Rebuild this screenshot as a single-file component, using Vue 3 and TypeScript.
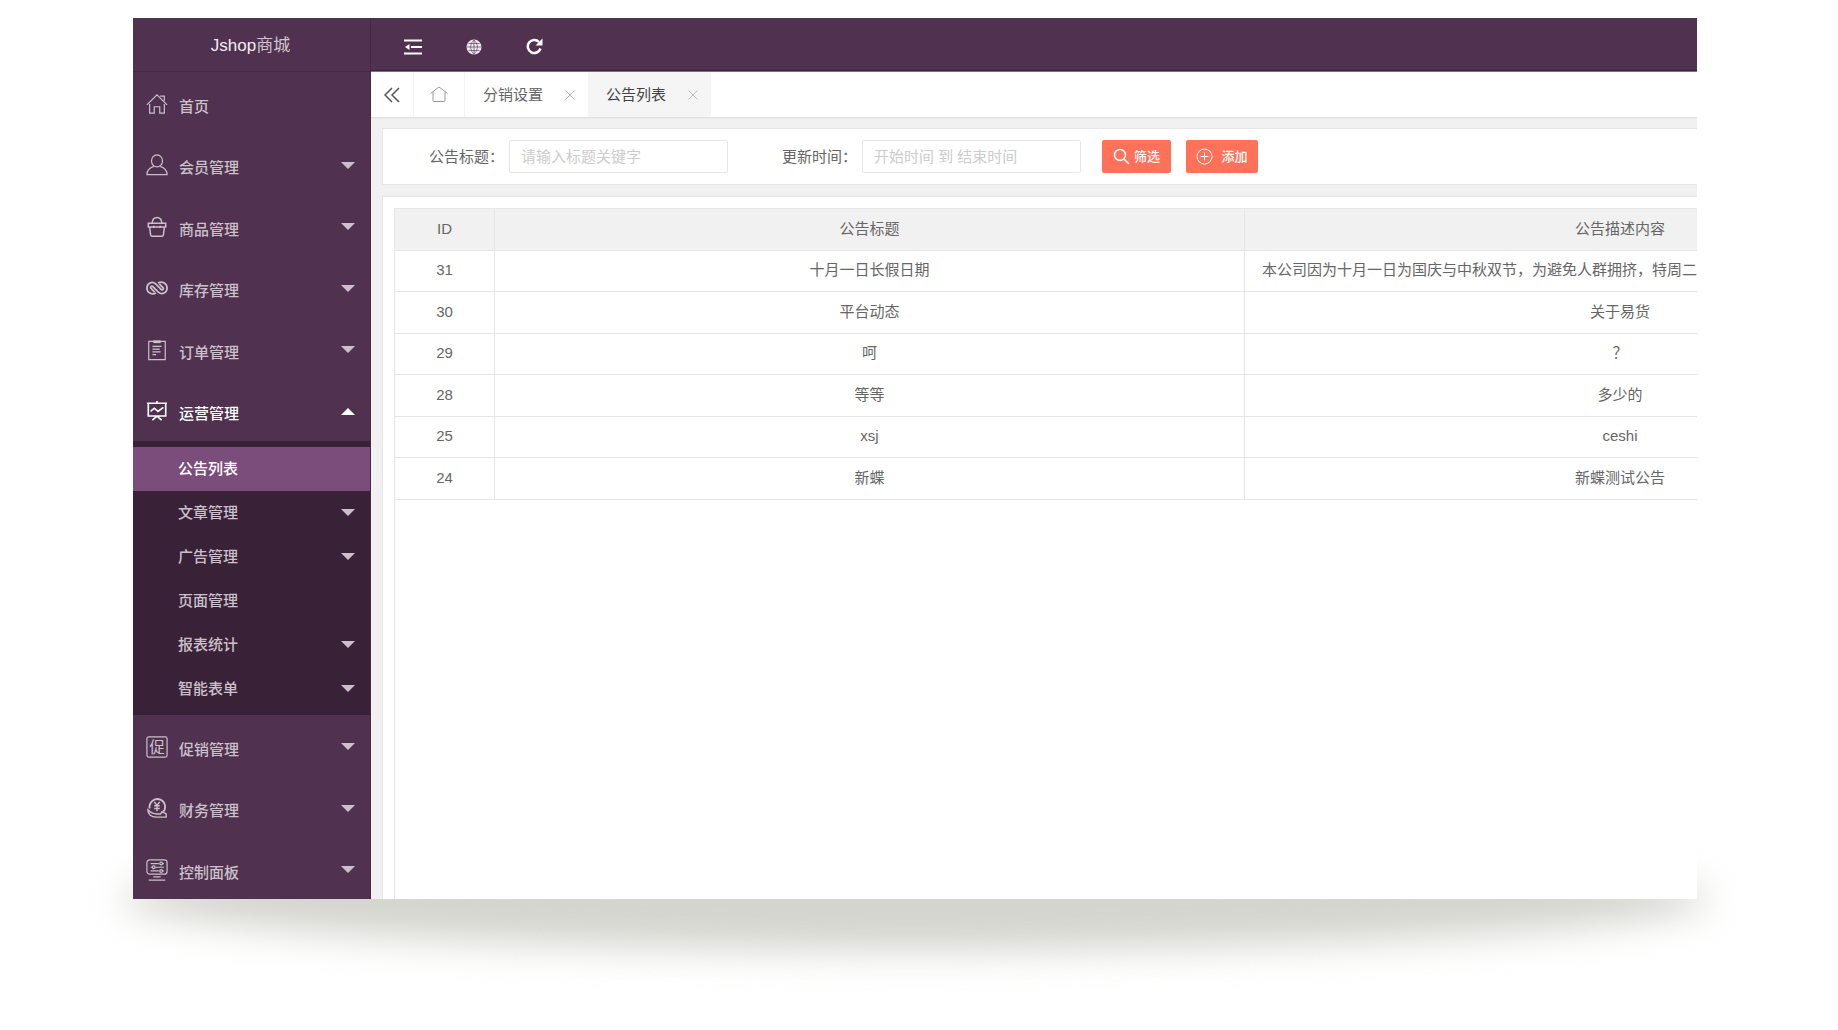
<script setup lang="ts">
import { ref } from 'vue'

interface MenuItem {
  label: string
  icon: string
  expandable?: boolean
  open?: boolean
  children?: { label: string; expandable?: boolean; current?: boolean }[]
}

const menu: MenuItem[] = [
  { label: '首页', icon: 'home' },
  { label: '会员管理', icon: 'user', expandable: true },
  { label: '商品管理', icon: 'bag', expandable: true },
  { label: '库存管理', icon: 'link', expandable: true },
  { label: '订单管理', icon: 'order', expandable: true },
  {
    label: '运营管理',
    icon: 'board',
    expandable: true,
    open: true,
    children: [
      { label: '公告列表', current: true },
      { label: '文章管理', expandable: true },
      { label: '广告管理', expandable: true },
      { label: '页面管理' },
      { label: '报表统计', expandable: true },
      { label: '智能表单', expandable: true },
    ],
  },
  { label: '促销管理', icon: 'promo', expandable: true },
  { label: '财务管理', icon: 'finance', expandable: true },
  { label: '控制面板', icon: 'panel', expandable: true },
]

const rows = [
  { id: 31, title: '十月一日长假日期', content: '本公司因为十月一日为国庆与中秋双节，为避免人群拥挤，特周二', long: true },
  { id: 30, title: '平台动态', content: '关于易货' },
  { id: 29, title: '呵', content: '？' },
  { id: 28, title: '等等', content: '多少的' },
  { id: 25, title: 'xsj', content: 'ceshi' },
  { id: 24, title: '新蝶', content: '新蝶测试公告' },
]

const keyword = ref('')
const period = ref('')
</script>

<template>
  <div class="stage">
    <div class="window">
      <aside class="side">
        <div class="brand">Jshop<span>商城</span></div>
        <ul class="menu">
          <li v-for="item in menu" :key="item.label" :class="{ open: item.open }">
            <a href="#" class="entry">
              <svg class="icon" viewBox="0 0 24 24">
                <g v-if="item.icon === 'home'">
                  <path d="M1 13L12 2l11 11M4 12v10h5v-7h6v7h5V12M15.500 3.500h4.500v5" />
                </g>
                <g v-else-if="item.icon === 'user'">
                  <ellipse cx="12" cy="7.500" rx="6" ry="6.500" />
                  <path d="M8.500 13.500C4 15 1 18 1 22.500h22c0-4.500-3-7.500-7.500-9" />
                </g>
                <g v-else-if="item.icon === 'bag'" stroke-width="1.600">
                  <path d="M2.500 8h19v4h-19zM4 12l1 8.500c0 1 .5 1.500 1.500 1.500h11c1 0 1.500-.5 1.500-1.500L20 12M6.500 8c1-8.500 10-8.500 11 0" />
                  <path d="M8.500 10.500v2.500M15.500 10.500v2.500" stroke-width="2" />
                </g>
                <g v-else-if="item.icon === 'link'" stroke-width="1.900">
                  <path d="M11 17.500C6 20 1 17 1 12s5.500-8 9.500-4.500l6 6c1.500 1.500 3.500-.5 2-2l-4-4" />
                  <path d="M13 6.500C18 4 23 7 23 12s-5.500 8-9.500 4.500l-6-6c-1.500-1.500-3.500 .5-2 2l4 4" />
                </g>
                <g v-else-if="item.icon === 'order'">
                  <path d="M3 2.500h18v20H3z" />
                  <path d="M8 3h8" stroke-width="3" />
                  <path d="M7 8h10M7 11h8M7 14h9M7 17h4" />
                </g>
                <g v-else-if="item.icon === 'board'" stroke-width="1.800">
                  <path d="M1 3.500h22M2.500 3.500v14h19v-14M12 1v2.500M12 17.500L7 22M12 17.500l5 4.500" />
                  <path d="M5 12.500l4-3.500 4 3.500L19 8" />
                </g>
                <g v-else-if="item.icon === 'promo'">
                  <rect x="1" y="1" width="22" height="22" rx="2" />
                  <text x="12" y="18" text-anchor="middle" class="glyph">促</text>
                </g>
                <g v-else-if="item.icon === 'finance'" stroke-width="1.500">
                  <path d="M4 12.500a8.500 8.500 0 1 1 15 3.500" stroke-width="2" />
                  <path d="M9 5.500l3 3.500 3-3.500M12 9v6.500M9 9.500h6M9 12.500h6" />
                  <path d="M2 14c0 5 4 8 9 8h11v-3.500l-4.500-2.500-1.500 2.500h-4.500c-3.500 0-6-1-9.500-4.500z" />
                </g>
                <g v-else>
                  <rect x="1" y="1" width="22" height="15.500" rx="3" />
                  <path d="M5 5h9M18.500 5h1M5 9h1.500M10.500 9h9M5 13h9M18.500 13h1M8 19.500h8M3 23h18" />
                  <circle cx="16.500" cy="5" r="1.500" /><circle cx="8.500" cy="9" r="1.500" /><circle cx="16.500" cy="13" r="1.500" />
                </g>
              </svg>
              <span class="name">{{ item.label }}</span>
              <i v-if="item.expandable" class="caret" :class="{ up: item.open }"></i>
            </a>
            <ul v-if="item.children" class="submenu">
              <li v-for="child in item.children" :key="child.label">
                <a href="#" class="sub" :class="{ current: child.current }">
                  <span>{{ child.label }}</span>
                  <i v-if="child.expandable" class="caret"></i>
                </a>
              </li>
            </ul>
          </li>
        </ul>
      </aside>

      <div class="main">
        <header class="topbar">
          <button type="button" aria-label="收起菜单">
            <svg width="18" height="16" viewBox="0 0 18 16">
              <path d="M0 1.500h18M7 8h11M0 14.500h18" fill="none" stroke="#fff" stroke-width="2" />
              <path d="M5.500 5v6L1 8z" fill="#fff" />
            </svg>
          </button>
          <button type="button" aria-label="前台">
            <svg width="16" height="16" viewBox="0 0 16 16">
              <circle cx="8" cy="8" r="7.500" fill="#efe9ef" />
              <path d="M8 1v14M1 8h14M2.500 4.500h11M2.500 11.500h11M8 1c-4.500 4-4.500 10 0 14M8 1c4.500 4 4.500 10 0 14" fill="none" stroke="#50314f" stroke-width="1" opacity=".6" />
            </svg>
          </button>
          <button type="button" aria-label="刷新">
            <svg width="17" height="17" viewBox="0 0 17 17">
              <path d="M13 4a6.500 6.500 0 1 0 1.500 6.500" fill="none" stroke="#fff" stroke-width="2.500" />
              <path d="M16.500 .5v7h-7z" fill="#fff" />
            </svg>
          </button>
        </header>

        <nav class="tabs">
          <button type="button" class="scroll" aria-label="向左">
            <svg width="16" height="16" viewBox="0 0 16 16"><path d="M8 1L1 8l7 7M15 1L8 8l7 7" fill="none" stroke="#555" stroke-width="1.500" /></svg>
          </button>
          <a href="#" class="house" aria-label="首页">
            <svg width="18" height="17" viewBox="0 0 18 17"><path d="M.5 7.500L9 1l8.500 6.500M3 6v8.500q0 1 1 1h10q1 0 1-1V6" fill="none" stroke="#999" /></svg>
          </a>
          <a href="#" class="tab">
            <span>分销设置</span>
            <svg width="10" height="10" viewBox="0 0 10 10"><path d="M.5 .5l9 9M9.500 .5l-9 9" fill="none" stroke="#bbb" /></svg>
          </a>
          <a href="#" class="tab active">
            <span>公告列表</span>
            <svg width="10" height="10" viewBox="0 0 10 10"><path d="M.5 .5l9 9M9.500 .5l-9 9" fill="none" stroke="#bbb" /></svg>
          </a>
        </nav>

        <div class="body">
          <form class="card filter" @submit.prevent>
            <label for="keyword">公告标题：</label>
            <input id="keyword" v-model="keyword" type="text" placeholder="请输入标题关键字" />
            <label for="period">更新时间：</label>
            <input id="period" v-model="period" type="text" placeholder="开始时间 到 结束时间" />
            <button type="submit" class="btn search">
              <svg width="17" height="17" viewBox="0 0 17 17"><circle cx="7" cy="7" r="5.500" /><path d="M11 11l5 5" /></svg>
              <span>筛选</span>
            </button>
            <button type="button" class="btn add">
              <svg width="17" height="17" viewBox="0 0 17 17" class="thin"><circle cx="8.500" cy="8.500" r="7.500" /><path d="M8.500 4.500v8M4.500 8.500h8" /></svg>
              <span>添加</span>
            </button>
          </form>

          <section class="card list">
            <div class="grid">
              <table>
                <colgroup><col class="c-id" /><col class="c-title" /><col class="c-text" /></colgroup>
                <thead>
                  <tr><th>ID</th><th>公告标题</th><th>公告描述内容</th></tr>
                </thead>
                <tbody>
                  <tr v-for="row in rows" :key="row.id">
                    <td>{{ row.id }}</td>
                    <td>{{ row.title }}</td>
                    <td :class="{ long: row.long }">{{ row.content }}</td>
                  </tr>
                </tbody>
              </table>
            </div>
          </section>
        </div>
      </div>
    </div>
  </div>
</template>

<style>
body {
  margin: 0;
  background: #fff;
}
</style>

<style scoped>
.stage {
  padding: 18px 141px 131px 133px;
  overflow: hidden;
  font-family: "Liberation Sans", "Noto Sans CJK SC", sans-serif;
  font-size: 15px;
  color: #666;
}
.stage * {
  box-sizing: border-box;
}
.window {
  position: relative;
  display: flex;
}
.window::before {
  content: "";
  position: absolute;
  left: -12px;
  right: -12px;
  bottom: -52px;
  height: 104px;
  border-radius: 50%;
  background: #d5d5cf;
  filter: blur(18px);
}
a {
  color: inherit;
  text-decoration: none;
}
ul {
  list-style: none;
  margin: 0;
  padding: 0;
}
button {
  font: inherit;
  border: 0;
  padding: 0;
  background: none;
  cursor: pointer;
}
svg {
  display: block;
  flex: none;
}

.side {
  position: relative;
  flex: none;
  width: 238px;
  background: #50314f;
  border-right: 1px solid #462845;
}
.brand {
  height: 54px;
  line-height: 56px;
  padding-right: 2px;
  text-align: center;
  font-size: 17px;
  color: #f1edf1;
  border-bottom: 1px solid #462a45;
}
.brand span {
  color: #cfc5cf;
}
.menu {
  color: #cbc1cb;
}
.entry {
  display: flex;
  align-items: center;
  height: 61px;
  padding: 2px 15px 0 13px;
}
.menu > li:nth-child(even) .entry {
  height: 62px;
}
.open .entry {
  color: #fff;
}
.icon {
  width: 22px;
  height: 22px;
  fill: none;
  stroke: currentColor;
  stroke-width: 1.3;
}
.glyph {
  font-size: 17px;
  fill: currentColor;
  stroke: none;
}
.name {
  margin-left: 11px;
  padding-top: 3px;
  font-weight: 500;
}
.caret {
  margin-left: auto;
  border: 7px solid transparent;
  border-top-color: currentColor;
  border-bottom: 0;
}
.caret.up {
  border-top: 0;
  border-bottom: 7px solid currentColor;
}
.submenu {
  padding: 6px 0 4px;
  background: #392237;
}
.sub {
  display: flex;
  align-items: center;
  height: 44px;
  padding: 0 15px 2px 45px;
  font-weight: 500;
}
.sub span {
  padding-bottom: 2px;
}
.sub.current {
  background: #7b4d7b;
  color: #fff;
}

.main {
  position: relative;
  flex: 1;
  min-width: 0;
  display: flex;
  flex-direction: column;
  overflow: hidden;
  background: #f1f1f1;
}
.topbar {
  display: flex;
  height: 54px;
  padding: 4px 0 0 11px;
  background: #50314f;
  border-bottom: 1px solid #866b86;
  box-shadow: inset 0 -1px #3f1f3e;
}
.topbar button {
  display: flex;
  align-items: center;
  justify-content: center;
  width: 61px;
}
.tabs {
  display: flex;
  height: 46px;
  background: #fff;
  border-bottom: 1px solid #e2e2e2;
  box-shadow: 0 1px 1px #ebebeb;
}
.scroll,
.house {
  display: flex;
  align-items: center;
  justify-content: center;
  width: 43px;
  border-right: 1px solid #f3f3f3;
}
.house {
  width: 51px;
}
.tab {
  display: flex;
  align-items: center;
  width: 123px;
  padding: 0 13px 0 18px;
  justify-content: space-between;
}
.tab span {
  padding-bottom: 2px;
}
.tab.active {
  background: #f5f5f5;
  color: #444;
}
.body {
  flex: 1;
  display: flex;
  flex-direction: column;
  gap: 11px;
  padding: 10px 0 0 11px;
}
.card {
  background: #fff;
  border: 1px solid #e6e6e6;
  border-right: 0;
}
.filter {
  display: flex;
  align-items: center;
  height: 57px;
}
.filter label {
  width: 80px;
  margin-left: 46px;
  padding-bottom: 2px;
  white-space: nowrap;
}
.filter input {
  width: 219px;
  height: 33px;
  padding: 0 11px 1px;
  border: 1px solid #e6e6e6;
  border-radius: 2px;
  background: #fff;
  font: inherit;
  outline: 0;
}
.filter input + label {
  margin-left: 54px;
}
.filter input::placeholder {
  color: #ccc;
  opacity: 1;
}
.btn {
  display: flex;
  align-items: center;
  justify-content: center;
  height: 33px;
  border-radius: 2px;
  background: #ff7159;
  color: #fff;
  font-size: 13px;
  font-weight: 500;
}
.btn span {
  padding-bottom: 2px;
}
.btn svg {
  fill: none;
  stroke: currentColor;
  stroke-width: 1.500;
}
.btn svg.thin {
  stroke-width: 1;
}
.search {
  width: 69px;
  margin-left: 21px;
  gap: 4px;
}
.add {
  width: 72px;
  margin-left: 15px;
  gap: 8px;
}
.list {
  flex: 1;
  border-bottom: 0;
  padding: 11px 0 0 11px;
  overflow: hidden;
}
.grid {
  height: 100%;
  border-left: 1px solid #e6e6e6;
}
table {
  width: 1601px;
  table-layout: fixed;
  border-collapse: separate;
  border-spacing: 0;
  border-top: 1px solid #e6e6e6;
}
.c-id {
  width: 100px;
}
.c-title {
  width: 750px;
}
th,
td {
  height: 42px;
  padding: 0 17px 2px;
  line-height: 22px;
  border-right: 1px solid #e6e6e6;
  border-bottom: 1px solid #e6e6e6;
  text-align: center;
  font-weight: 400;
  white-space: nowrap;
}
th {
  background: #f1f1f1;
}
tbody tr:nth-child(odd) td {
  height: 41px;
}
.long {
  text-align: left;
}
</style>
